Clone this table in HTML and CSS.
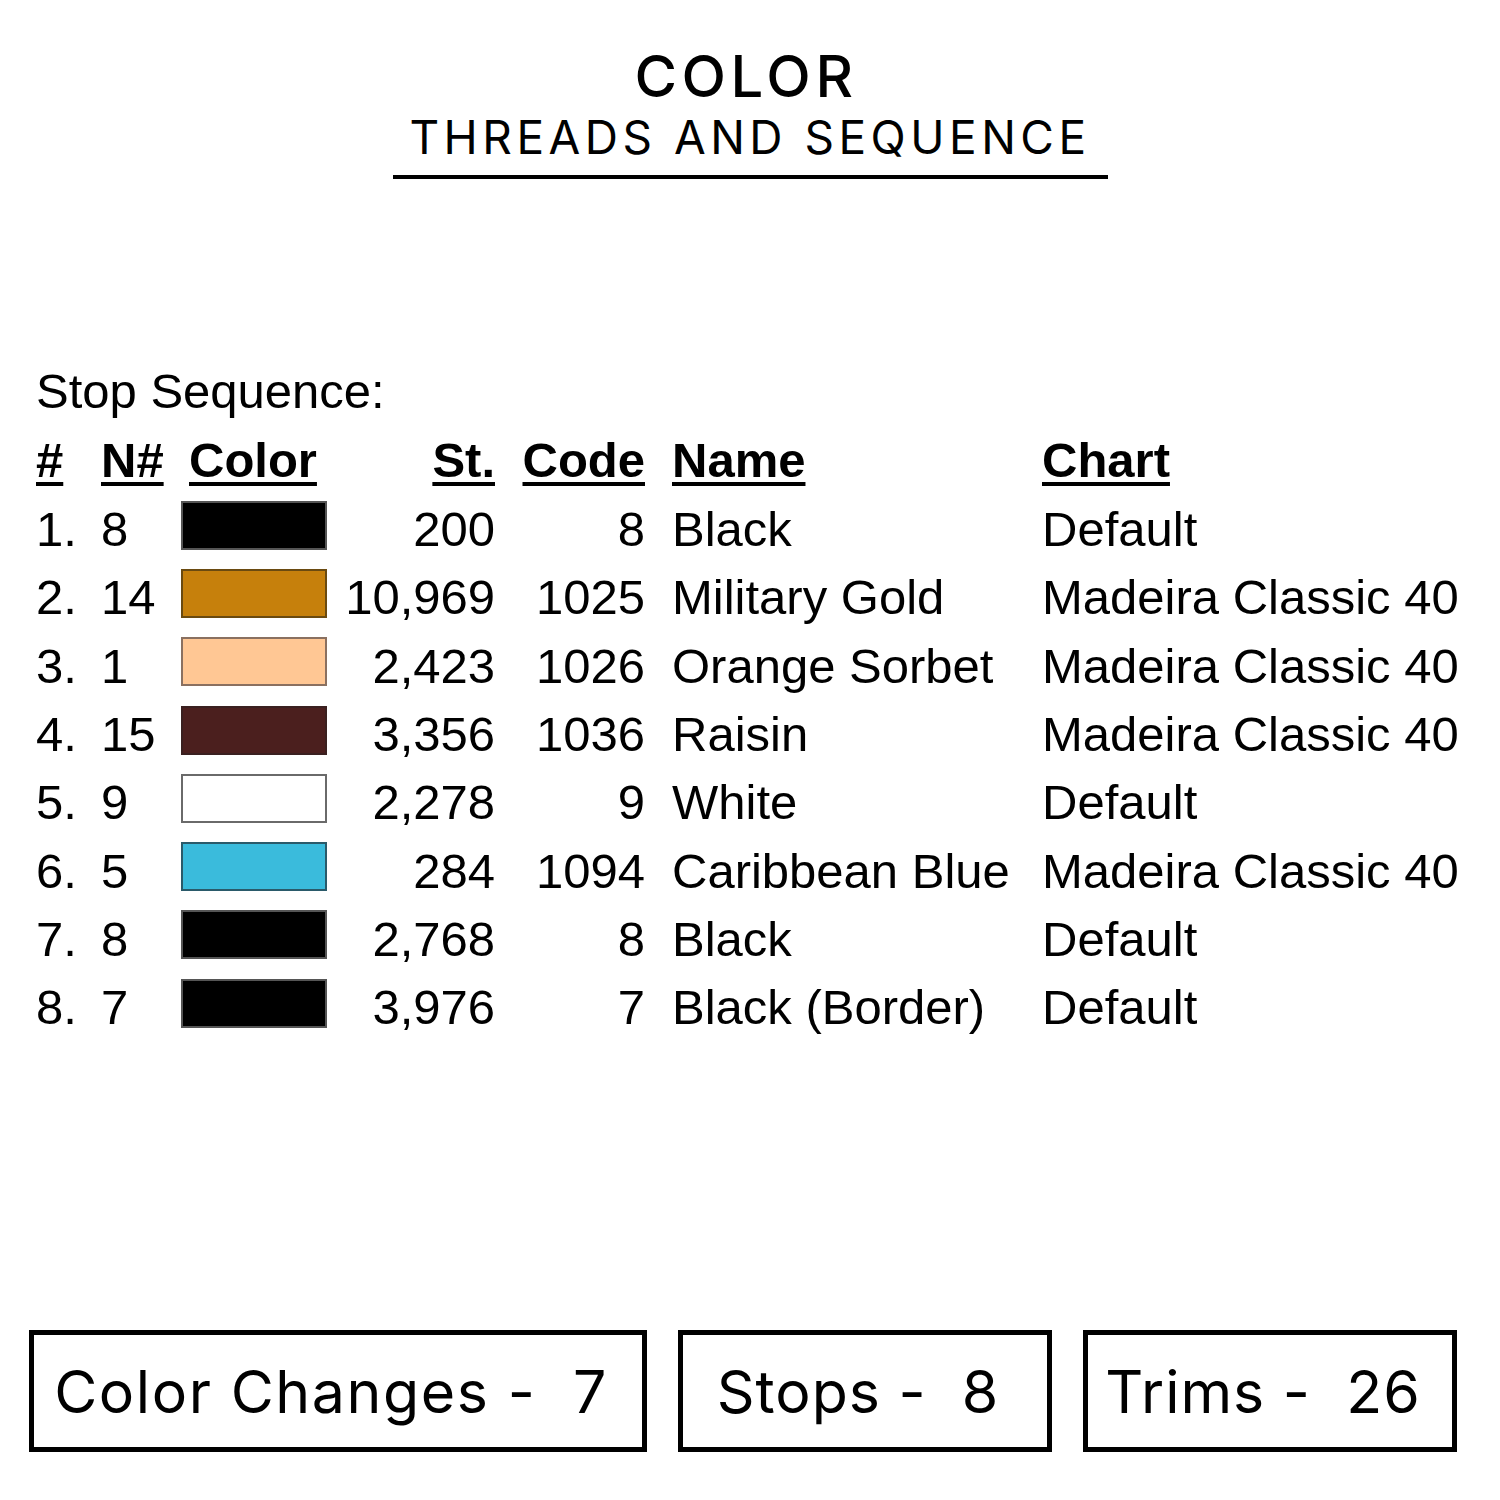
FILE: index.html
```html
<!DOCTYPE html>
<html lang="en">
<head>
<meta charset="utf-8">
<title>Color Threads and Sequence</title>
<link rel="stylesheet" href="styles.css">
</head>
<body>
<div class="page">
  <header class="title-block">
    <div class="title">COLOR</div>
    <div class="subtitle">THREADS AND SEQUENCE</div>
  </header>

  <section class="sequence">
    <div class="caption">Stop Sequence:</div>
    <div class="grid">
      <div class="th">#</div>
      <div class="th">N#</div>
      <div class="th color-th">Color</div>
      <div class="th num">St.</div>
      <div class="th num">Code</div>
      <div class="th name">Name</div>
      <div class="th">Chart</div>

      <div>1.</div><div>8</div><div class="swatch-cell"><span class="swatch black"></span></div><div class="num">200</div><div class="num">8</div><div class="name">Black</div><div>Default</div>
      <div>2.</div><div>14</div><div class="swatch-cell"><span class="swatch gold"></span></div><div class="num">10,969</div><div class="num">1025</div><div class="name">Military Gold</div><div>Madeira Classic 40</div>
      <div>3.</div><div>1</div><div class="swatch-cell"><span class="swatch sorbet"></span></div><div class="num">2,423</div><div class="num">1026</div><div class="name">Orange Sorbet</div><div>Madeira Classic 40</div>
      <div>4.</div><div>15</div><div class="swatch-cell"><span class="swatch raisin"></span></div><div class="num">3,356</div><div class="num">1036</div><div class="name">Raisin</div><div>Madeira Classic 40</div>
      <div>5.</div><div>9</div><div class="swatch-cell"><span class="swatch white"></span></div><div class="num">2,278</div><div class="num">9</div><div class="name">White</div><div>Default</div>
      <div>6.</div><div>5</div><div class="swatch-cell"><span class="swatch blue"></span></div><div class="num">284</div><div class="num">1094</div><div class="name">Caribbean Blue</div><div>Madeira Classic 40</div>
      <div>7.</div><div>8</div><div class="swatch-cell"><span class="swatch black"></span></div><div class="num">2,768</div><div class="num">8</div><div class="name">Black</div><div>Default</div>
      <div>8.</div><div>7</div><div class="swatch-cell"><span class="swatch black"></span></div><div class="num">3,976</div><div class="num">7</div><div class="name">Black (Border)</div><div>Default</div>
    </div>
  </section>

  <footer class="stats">
    <div class="stat wide">Color Changes -&nbsp; 7</div>
    <div class="stat">Stops -&nbsp; 8</div>
    <div class="stat">Trims -&nbsp; 26</div>
  </footer>
</div>
</body>
</html>
```

FILE: styles.css
```css
html, body {
  margin: 0;
  padding: 0;
  background: #ffffff;
}

.page {
  width: 1500px;
  height: 1500px;
  display: flex;
  flex-direction: column;
  color: #000;
}

.title-block {
  display: flex;
  flex-direction: column;
  align-items: center;
  padding-top: 44px;
  font-family: "Inter", "Noto Sans", sans-serif;
}

.title {
  font-size: 58px;
  font-weight: 500;
  line-height: 64px;
  letter-spacing: 4.6px;
  margin-left: -8px;
}

.subtitle {
  width: 715px;
  text-align: center;
  font-size: 46px;
  font-weight: 400;
  line-height: 58px;
  letter-spacing: 4.5px;
  border-bottom: 4px solid #000;
  padding-bottom: 9px;
}

.sequence {
  padding-left: 36px;
  margin-top: 184px;
  font-family: "Liberation Sans", Arial, sans-serif;
  font-size: 49px;
}

.caption {
  line-height: 56px;
  margin-bottom: 11px;
}

.grid {
  display: grid;
  grid-template-columns: 65px 80px 146px 168px 150px 397px auto;
  grid-template-rows: 65px;
  grid-auto-rows: 68.3px;
  align-items: center;
  line-height: 56px;
}

.th {
  font-weight: 700;
  text-decoration: underline;
  text-decoration-thickness: 4px;
  text-underline-offset: 5px;
  height: 62px;
}

.color-th {
  padding-left: 8px;
}

.num {
  text-align: right;
}

.name {
  padding-left: 27px;
}

.swatch-cell {
  display: flex;
  align-items: center;
}

.swatch {
  display: block;
  width: 146px;
  height: 49px;
  box-sizing: border-box;
  border: 2px solid #6b6b6b;
  margin-bottom: 8px;
}

.black { background: #000000; border-color: #555; }
.gold { background: #c6800c; border-color: #6a4a10; }
.sorbet { background: #ffc794; border-color: #8a7060; }
.raisin { background: #4b1f1e; border-color: #3a2020; }
.white { background: #ffffff; border-color: #6a6a6a; }
.blue { background: #3abbdc; border-color: #2a5a6a; }

.stats {
  margin-top: auto;
  margin-bottom: 48px;
  display: flex;
  gap: 31px;
  padding-left: 29px;
  font-family: "Inter", "Noto Sans", sans-serif;
}

.stat {
  width: 374px;
  height: 122px;
  box-sizing: border-box;
  border: 5px solid #000;
  display: flex;
  align-items: center;
  justify-content: center;
  font-size: 59px;
  font-weight: 400;
  letter-spacing: 1px;
  padding-right: 14px;
}

.stat.wide {
  width: 618px;
  letter-spacing: 1.6px;
}
```
